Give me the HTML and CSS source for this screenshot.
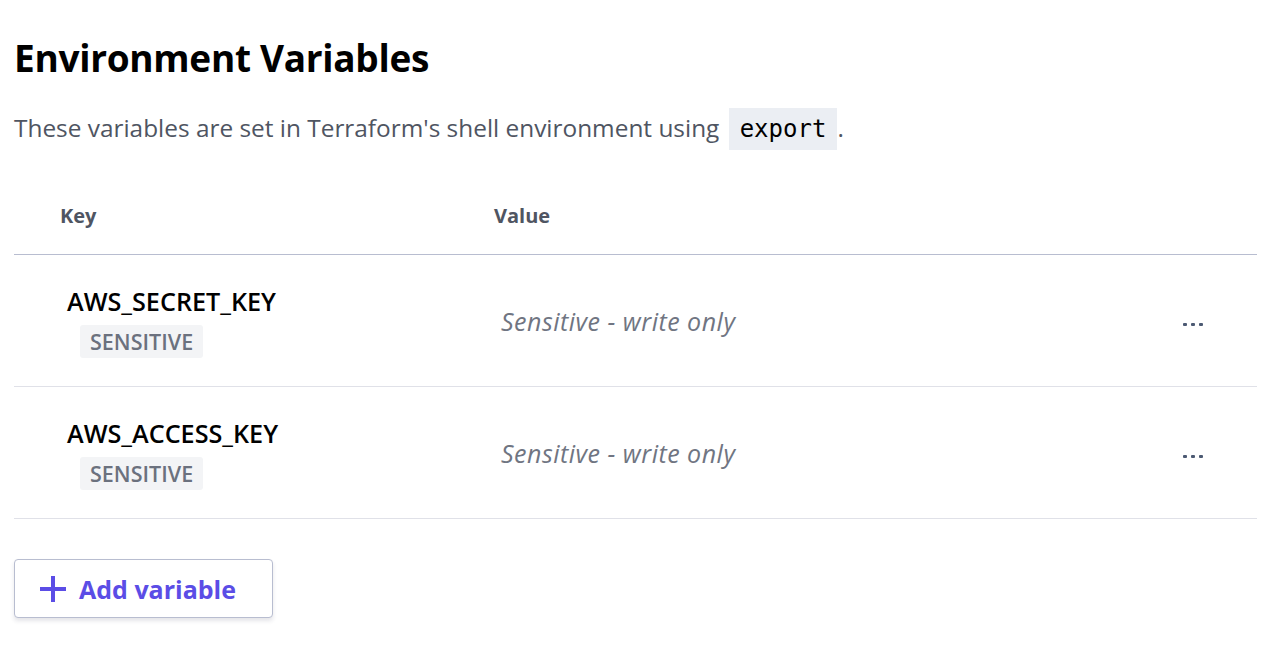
FILE: index.html
```html
<!DOCTYPE html>
<html lang="en">
<head>
<meta charset="utf-8">
<title>Environment Variables</title>
<link rel="stylesheet" href="styles.css">
</head>
<body>
<main class="page">
  <h1 class="title">Environment Variables</h1>
  <p class="intro">These variables are set in Terraform's shell environment using <code class="code">export</code>.</p>

  <div class="vars">
    <div class="vars-head">
      <div class="col-key">Key</div>
      <div class="col-value">Value</div>
      <div class="col-actions"></div>
    </div>
    <div class="vars-row">
      <div class="col-key">
        <div class="key-name">AWS_SECRET_KEY</div>
        <span class="badge">SENSITIVE</span>
      </div>
      <div class="col-value"><em class="value-text">Sensitive - write only</em></div>
      <div class="col-actions"><button class="more" aria-label="More"><span></span><span></span><span></span></button></div>
    </div>
    <div class="vars-row">
      <div class="col-key">
        <div class="key-name">AWS_ACCESS_KEY</div>
        <span class="badge">SENSITIVE</span>
      </div>
      <div class="col-value"><em class="value-text">Sensitive - write only</em></div>
      <div class="col-actions"><button class="more" aria-label="More"><span></span><span></span><span></span></button></div>
    </div>
  </div>

  <button class="add-btn">
    <svg class="plus" width="26" height="26" viewBox="0 0 26 26" aria-hidden="true"><path d="M13 0v26M0 13h26" stroke="currentColor" stroke-width="4" fill="none"/></svg>
    <span>Add variable</span>
  </button>
</main>
</body>
</html>
```

FILE: styles.css
```css
* { box-sizing: border-box; }
html, body { margin: 0; background: #fff; }
body {
  font-family: "Open Sans", "Noto Sans", sans-serif;
  color: #000;
}
.page {
  padding: 30px 10px 40px 14px;
}
.title {
  margin: 0;
  font-size: 37px;
  font-weight: 700;
  line-height: 56px;
  letter-spacing: -0.3px;
}
.intro {
  margin: 21px 0 0 0;
  font-size: 24.4px;
  line-height: 42px;
  color: #4f5562;
}
.code {
  display: inline-block;
  font-family: "DejaVu Sans Mono", "Liberation Mono", monospace;
  font-size: 24px;
  line-height: 42px;
  padding: 0 11px;
  background: #ebeef3;
  color: #000;
  margin-left: 3px;
}
.vars {
  margin-top: 23px;
  display: flex;
  flex-direction: column;
}
.vars-head, .vars-row {
  display: grid;
  grid-template-columns: 434px 1fr 120px;
  align-items: center;
}
.vars-head {
  height: 82px;
  border-bottom: 1px solid #b8bdd0;
  font-size: 20px;
  font-weight: 700;
  color: #4f5562;
  padding-top: 4px;
}
.vars-head .col-key { padding-left: 46px; }
.vars-head .col-value { padding-left: 46px; }
.vars-row {
  height: 132px;
  border-bottom: 1px solid #e0e1e8;
}
.vars-row .col-key { padding-left: 53px; display: flex; flex-direction: column; align-items: flex-start; }
.vars-row .col-value { padding-left: 53px; }
.key-name {
  font-size: 25.2px;
  font-weight: 600;
  line-height: 32px;
  margin-top: 2px;
}
.badge {
  margin-left: 13px;
  margin-top: 8px;
  padding: 0 10px;
  height: 33px;
  line-height: 33px;
  font-size: 21.5px;
  font-weight: 600;
  color: #6b717e;
  background: #f3f4f6;
  border-radius: 3px;
}
.value-text {
  font-size: 25px;
  font-style: italic;
  color: #707582;
  letter-spacing: 0.5px;
}
.col-actions { display: flex; justify-content: flex-start; padding-left: 46px; }
.more {
  border: 0;
  background: none;
  padding: 4px 0;
  display: flex;
  gap: 4px;
  cursor: pointer;
  margin-top: 8px;
}
.more span {
  width: 4px;
  height: 3px;
  background: #4c5a73;
  border-radius: 1px;
}
.add-btn {
  margin-top: 40px;
  width: 259px;
  height: 59px;
  display: flex;
  align-items: center;
  gap: 13px;
  padding: 0 0 0 25px;
  border: 1px solid #b8bdd0;
  border-radius: 4px;
  background: #fff;
  box-shadow: 0 3px 4px rgba(40, 45, 70, 0.12);
  color: #5b4de6;
  font-family: "Open Sans", "Noto Sans", sans-serif;
  font-size: 25px;
  font-weight: 700;
  cursor: pointer;
}
.plus { flex: none; }
```
